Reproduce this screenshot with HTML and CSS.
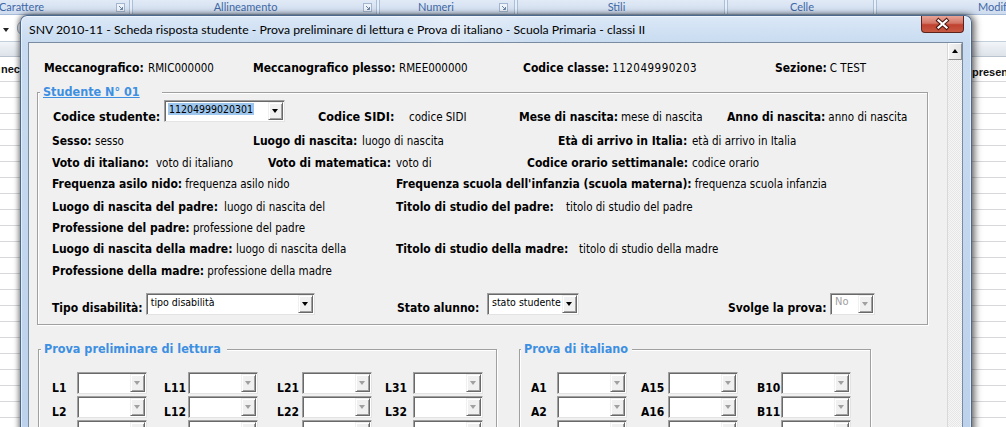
FILE: index.html
```html
<!DOCTYPE html>
<html lang="it">
<head>
<meta charset="utf-8">
<title>SNV 2010-11</title>
<link rel="stylesheet" href="styles.css">
</head>
<body>
<div class="excel">
  <div class="ribbon">
    <div class="grp rg1"><span>Carattere</span><svg class="launch" width="9" height="9" viewBox="0 0 9 9"><rect x="0.5" y="0.5" width="8" height="8" fill="#eef3f9" stroke="#a3b6cf"/><path d="M3 3 L6.5 6.5 M6.5 4 V6.5 H4" stroke="#6d86a8" fill="none"/></svg></div>
    <div class="sep"></div>
    <div class="grp rg2"><span>Allineamento</span><svg class="launch" width="9" height="9" viewBox="0 0 9 9"><rect x="0.5" y="0.5" width="8" height="8" fill="#eef3f9" stroke="#a3b6cf"/><path d="M3 3 L6.5 6.5 M6.5 4 V6.5 H4" stroke="#6d86a8" fill="none"/></svg></div>
    <div class="sep"></div>
    <div class="grp rg3"><span>Numeri</span><svg class="launch" width="9" height="9" viewBox="0 0 9 9"><rect x="0.5" y="0.5" width="8" height="8" fill="#eef3f9" stroke="#a3b6cf"/><path d="M3 3 L6.5 6.5 M6.5 4 V6.5 H4" stroke="#6d86a8" fill="none"/></svg></div>
    <div class="sep"></div>
    <div class="grp rg4"><span>Stili</span></div>
    <div class="sep"></div>
    <div class="grp rg5"><span>Celle</span></div>
    <div class="sep"></div>
    <div class="grp rg6"><span>Modifica</span></div>
  </div>
  <div class="fbar">
    <span class="namebox-arrow"></span>
    <span class="fx-btn"></span>
  </div>
  <div class="sheet-head"></div>
  <div class="sheet-row1">
    <span class="cell-left">nec</span>
    <span class="cell-right">presenze</span>
  </div>
  <div class="sheet-rows"></div>
</div>

<div class="dialog">
  <div class="titlebar">
    <span class="title">SNV 2010-11 - Scheda risposta studente - Prova preliminare di lettura e Prova di italiano - Scuola Primaria - classi II</span>
  </div>
  <div class="close">
    <svg width="41" height="16" viewBox="0 0 41 16">
      <path d="M16.5 4.5 L24.5 11.5 M24.5 4.5 L16.5 11.5" stroke="#4a1712" stroke-width="4.2" stroke-linecap="square" fill="none"/>
      <path d="M16.5 4.5 L24.5 11.5 M24.5 4.5 L16.5 11.5" stroke="#ffffff" stroke-width="2.2" stroke-linecap="square" fill="none"/>
    </svg>
  </div>
  <div class="frame">
    <div class="client">
      <div class="hdr">
        <div class="f h1"><b class="lb">Meccanografico:</b><span class="v">RMIC000000</span></div>
        <div class="f h2"><b class="lb">Meccanografico plesso:</b><span class="v">RMEE000000</span></div>
        <div class="f h3"><b class="lb">Codice classe:</b><span class="v code">112049990203</span></div>
        <div class="f h4"><b class="lb">Sezione:</b><span class="v">C TEST</span></div>
      </div>

      <fieldset class="box box-stud">
        <legend class="cap cap-stud">Studente N° 01</legend>
        <div class="row r1">
          <div class="f a1"><b class="lb lb-lg">Codice studente:</b><div class="cb cb-stud"><span class="cbt"><span class="sel">11204999020301</span></span><span class="cbb"></span></div></div>
          <div class="f a2"><b class="lb lb-lg">Codice SIDI:</b><span class="v">codice SIDI</span></div>
          <div class="f a3"><b class="lb">Mese di nascita:</b><span class="v">mese di nascita</span></div>
          <div class="f a4"><b class="lb">Anno di nascita:</b><span class="v">anno di nascita</span></div>
        </div>
        <div class="row r2">
          <div class="f b1"><b class="lb">Sesso:</b><span class="v">sesso</span></div>
          <div class="f b2"><b class="lb">Luogo di nascita:</b><span class="v">luogo di nascita</span></div>
          <div class="f b3"><b class="lb">Età di arrivo in Italia:</b><span class="v">età di arrivo in Italia</span></div>
        </div>
        <div class="row r3">
          <div class="f c1"><b class="lb">Voto di italiano:</b><span class="v">voto di italiano</span></div>
          <div class="f c2"><b class="lb">Voto di matematica:</b><span class="v">voto di</span></div>
          <div class="f c3"><b class="lb">Codice orario settimanale:</b><span class="v">codice orario</span></div>
        </div>
        <div class="row r4">
          <div class="f d1"><b class="lb">Frequenza asilo nido:</b><span class="v">frequenza asilo nido</span></div>
          <div class="f d2"><b class="lb">Frequenza scuola dell'infanzia (scuola materna):</b><span class="v">frequenza scuola infanzia</span></div>
        </div>
        <div class="row r5">
          <div class="f e1"><b class="lb">Luogo di nascita del padre:</b><span class="v">luogo di nascita del</span></div>
          <div class="f e2"><b class="lb">Titolo di studio del padre:</b><span class="v">titolo di studio del padre</span></div>
        </div>
        <div class="row r6">
          <div class="f p1"><b class="lb">Professione del padre:</b><span class="v">professione del padre</span></div>
        </div>
        <div class="row r7">
          <div class="f m1"><b class="lb">Luogo di nascita della madre:</b><span class="v">luogo di nascita della</span></div>
          <div class="f m2"><b class="lb">Titolo di studio della madre:</b><span class="v">titolo di studio della madre</span></div>
        </div>
        <div class="row r8">
          <div class="f p2"><b class="lb">Professione della madre:</b><span class="v">professione della madre</span></div>
        </div>
        <div class="row r9">
          <div class="f k1"><b class="lb">Tipo disabilità:</b><div class="cb cb-dis"><span class="cbt">tipo disabilità</span><span class="cbb"></span></div></div>
          <div class="f k2"><b class="lb">Stato alunno:</b><div class="cb cb-stato"><span class="cbt">stato studente</span><span class="cbb"></span></div></div>
          <div class="f k3"><b class="lb">Svolge la prova:</b><div class="cb cb-svolge off"><span class="cbt">No</span><span class="cbb"></span></div></div>
        </div>
      </fieldset>

      <div class="tests">
        <fieldset class="box box-lett">
          <legend class="cap cap-lett">Prova preliminare di lettura</legend>
          <div class="grid grid-lett">
            <div class="grow">
              <div class="cell l1"><b class="gl">L1</b><div class="cb gcb off"><span class="cbt"></span><span class="cbb"></span></div></div>
              <div class="cell l2"><b class="gl">L11</b><div class="cb gcb off"><span class="cbt"></span><span class="cbb"></span></div></div>
              <div class="cell l3"><b class="gl">L21</b><div class="cb gcb off"><span class="cbt"></span><span class="cbb"></span></div></div>
              <div class="cell l4"><b class="gl">L31</b><div class="cb gcb off"><span class="cbt"></span><span class="cbb"></span></div></div>
            </div>
            <div class="grow">
              <div class="cell l1"><b class="gl">L2</b><div class="cb gcb off"><span class="cbt"></span><span class="cbb"></span></div></div>
              <div class="cell l2"><b class="gl">L12</b><div class="cb gcb off"><span class="cbt"></span><span class="cbb"></span></div></div>
              <div class="cell l3"><b class="gl">L22</b><div class="cb gcb off"><span class="cbt"></span><span class="cbb"></span></div></div>
              <div class="cell l4"><b class="gl">L32</b><div class="cb gcb off"><span class="cbt"></span><span class="cbb"></span></div></div>
            </div>
            <div class="grow">
              <div class="cell l1"><b class="gl">L3</b><div class="cb gcb off"><span class="cbt"></span><span class="cbb"></span></div></div>
              <div class="cell l2"><b class="gl">L13</b><div class="cb gcb off"><span class="cbt"></span><span class="cbb"></span></div></div>
              <div class="cell l3"><b class="gl">L23</b><div class="cb gcb off"><span class="cbt"></span><span class="cbb"></span></div></div>
              <div class="cell l4"><b class="gl">L33</b><div class="cb gcb off"><span class="cbt"></span><span class="cbb"></span></div></div>
            </div>
          </div>
        </fieldset>
        <fieldset class="box box-ital">
          <legend class="cap cap-ital">Prova di italiano</legend>
          <div class="grid grid-ital">
            <div class="grow">
              <div class="cell i1"><b class="gl">A1</b><div class="cb gcb off"><span class="cbt"></span><span class="cbb"></span></div></div>
              <div class="cell i2"><b class="gl">A15</b><div class="cb gcb off"><span class="cbt"></span><span class="cbb"></span></div></div>
              <div class="cell i3"><b class="gl">B10</b><div class="cb gcb off"><span class="cbt"></span><span class="cbb"></span></div></div>
            </div>
            <div class="grow">
              <div class="cell i1"><b class="gl">A2</b><div class="cb gcb off"><span class="cbt"></span><span class="cbb"></span></div></div>
              <div class="cell i2"><b class="gl">A16</b><div class="cb gcb off"><span class="cbt"></span><span class="cbb"></span></div></div>
              <div class="cell i3"><b class="gl">B11</b><div class="cb gcb off"><span class="cbt"></span><span class="cbb"></span></div></div>
            </div>
            <div class="grow">
              <div class="cell i1"><b class="gl">A3</b><div class="cb gcb off"><span class="cbt"></span><span class="cbb"></span></div></div>
              <div class="cell i2"><b class="gl">A17</b><div class="cb gcb off"><span class="cbt"></span><span class="cbb"></span></div></div>
              <div class="cell i3"><b class="gl">B12</b><div class="cb gcb off"><span class="cbt"></span><span class="cbb"></span></div></div>
            </div>
          </div>
        </fieldset>
      </div>
    </div>
    <div class="vscroll"><div class="sb-up"></div><div class="sb-track"></div></div>
  </div>
</div>
</body>
</html>
```

FILE: styles.css
```css
* { box-sizing: border-box; }
html, body { margin: 0; padding: 0; }
body {
  width: 1006px; height: 427px; overflow: hidden; position: relative;
  background: #fff; font-family: "DejaVu Sans Condensed", "DejaVu Sans", sans-serif;
}

/* ---------- Excel background ---------- */
.excel { width: 1006px; height: 427px; display: flex; flex-direction: column; overflow: hidden; }
.ribbon {
  height: 15px; flex: none; display: flex;
  background: linear-gradient(#e1eaf6, #cfdcee);
  border-bottom: 1px solid #a7bcd8;
  font: 11px Lato, "Noto Sans", sans-serif; color: #3f68a6;
}
.grp { flex: none; display: flex; justify-content: center; align-items: center; position: relative; line-height: 14px; }
.sep { flex: none; width: 4px; border-left: 1px solid #aabfda; border-right: 1px solid #aabfda; background: #e8eff8; }
.rg1 { margin-left: -86px; width: 215px; }
.rg2 { width: 243px; padding-right: 18px; }
.rg3 { width: 134px; padding-right: 22px; }
.rg4 { width: 206px; padding-right: 9px; }
.rg5 { width: 145px; padding-left: 3px; }
.rg6 { width: 200px; justify-content: flex-start; padding-left: 101px; }
.launch { position: absolute; top: 3px; display: block; }
.rg1 .launch { right: 4px; }
.rg2 .launch { right: 4px; }
.rg3 .launch { right: 6px; }

.fbar { height: 27px; flex: none; display: flex; align-items: center; gap: 8px; padding-left: 3px; background: #fff; border-bottom: 1px solid #c4cfdc; }
.namebox-arrow { width: 0; height: 0; border-left: 3px solid transparent; border-right: 3px solid transparent; border-top: 4px solid #222; margin-top: 3px; }
.fx-btn { width: 12px; height: 14px; border-radius: 6px; border: 1px solid #9aa7b6; background: linear-gradient(#f7f9fc, #d7dfe9); }

.sheet-head { height: 15px; flex: none; background: linear-gradient(#f1f4f8, #dde3ea); border-bottom: 1px solid #b9c3cf; }
.sheet-row1 {
  height: 25px; flex: none; display: flex; justify-content: space-between; align-items: center;
  border-bottom: 1px solid #d6d8db; font: bold 11px "Liberation Sans", sans-serif; color: #111;
}
.cell-left { padding-left: 1px; }
.cell-right { width: 34px; overflow: hidden; white-space: nowrap; padding-top: 6px; }
.sheet-rows { flex: 1; background: repeating-linear-gradient(to bottom, #fff 0 15px, #d6d8db 15px 16px); }

/* ---------- Dialog window ---------- */
.dialog {
  position: absolute; left: 20px; top: 15px; width: 952px; height: 440px;
  border: 1px solid #4c6a8e; border-bottom: 0;
  border-radius: 7px 7px 0 0;
  background:
    linear-gradient(100deg, rgba(255,255,255,0) 0 38%, rgba(255,255,255,.35) 45%, rgba(255,255,255,0) 55% 100%) 0 0 / 100% 27px no-repeat,
    linear-gradient(180deg, #dbe8f7 0px, #c8dbf0 27px, #bcd1eb 100%);
  box-shadow: 3px 0 7px rgba(0,0,0,.55), -2px 0 5px rgba(0,0,0,.35), inset 0 0 0 1px rgba(255,255,255,.55);
  display: flex; flex-direction: column;
  padding: 0 8px 0 7px;
}
.titlebar { height: 26px; flex: none; display: flex; align-items: center; padding-left: 1px; }
.title { font: 12.25px Lato, "Noto Sans", sans-serif; color: #000; white-space: nowrap; padding-top: 1px; }
.close {
  position: absolute; top: 0; right: 7px; width: 43px; height: 17px;
  border: 1px solid #5b231c; border-top: 0; border-radius: 0 0 4px 4px;
  background: linear-gradient(180deg, #e8a496 0%, #d27566 45%, #c0402f 55%, #c75a44 100%);
  display: flex; align-items: center; justify-content: center;
}
.close svg { display: block; }

.frame { flex: 1; display: flex; border: 1px solid #798ba0; border-bottom: 0; min-height: 0; }
.client { flex: 1; background: #f0f0f0; font-size: 12px; line-height: 14px; color: #000; overflow: hidden; }

/* scrollbar */
.vscroll { width: 15px; flex: none; display: flex; flex-direction: column; background: #f4f4f4; border-left: 1px solid #d8d8d8; }
.sb-up {
  height: 17px; flex: none; position: relative;
  background: linear-gradient(90deg, #f2f2f2, #e4e4e4);
  border: 1px solid; border-color: #fff #8e8f8f #8e8f8f #fff;
}
.sb-up::after {
  content: ""; position: absolute; left: 3px; top: 5px;
  border-left: 3.5px solid transparent; border-right: 3.5px solid transparent; border-bottom: 4px solid #000;
}
.sb-track { flex: 1; background: repeating-conic-gradient(#f6f6f6 0 25%, #e6e6e6 0 50%) 0 0 / 2px 2px; }

/* generic field */
.f { display: flex; align-items: flex-end; flex: none; white-space: nowrap; }
.lb { font-weight: bold; flex: none; padding-right: 3px; }
.lb-lg { font-size: 12.5px; }
.v { flex: none; font-size: 11.5px; }
.code { letter-spacing: 0.5px; }

/* header */
.hdr { display: flex; margin-top: 18px; padding-left: 15px; height: 14px; }
.h1 { width: 209px; } .h1 .lb { min-width: 104px; }
.h2 { width: 270px; } .h2 .lb { min-width: 146px; }
.h3 { width: 252px; } .h3 .lb { min-width: 79px; }
.h4 .lb { min-width: 52px; }

/* group frames */
.box {
  margin: 0; padding: 0; min-width: 0;
  border: 1px solid #a0a0a0;
  box-shadow: 1px 1px 0 #fff, inset 1px 1px 0 #fff;
}
.cap {
  padding: 0 0 0 3px; margin-left: 2px; height: 14px; line-height: 14px;
  font-weight: bold; font-size: 12.5px; color: #3d8fe2; background: #f0f0f0; white-space: nowrap;
}
.cap-stud { width: 122px; text-decoration: underline; }
.cap-lett { width: 186px; }
.cap-ital { width: 111px; margin-left: 1px; }

.box-stud { margin: 10px 0 0 8px; width: 891px; padding-bottom: 9px; }
.row { display: flex; align-items: flex-end; }
.r1 { margin-top: 1px; height: 24px; padding-left: 15px; }
.r2 { margin-top: 10px; padding-left: 14px; }
.r3 { margin-top: 8px; padding-left: 14px; }
.r4 { margin-top: 7px; padding-left: 14px; }
.r5 { margin-top: 9px; padding-left: 14px; }
.r6 { margin-top: 7px; padding-left: 14px; }
.r7 { margin-top: 7px; padding-left: 14px; }
.r8 { margin-top: 8px; padding-left: 14px; }
.r9 { margin-top: 15px; height: 22px; padding-left: 14px; }

.a1 { width: 265px; } .a1 .lb { min-width: 111px; }
.a2 { width: 201px; } .a2 .lb { min-width: 91px; }
.a3 { width: 208px; } .a3 .lb { min-width: 97px; }
.a4 .lb { min-width: 100px; }
.b1 { width: 201px; } .b1 .lb { min-width: 43px; }
.b2 { width: 305px; } .b2 .lb { min-width: 109px; }
.b3 .lb { min-width: 134px; }
.c1 { width: 216px; } .c1 .lb { min-width: 104px; }
.c2 { width: 259px; } .c2 .lb { min-width: 128px; }
.c3 .lb { min-width: 165px; }
.d1 { width: 344px; } .d1 .lb { min-width: 132px; }
.d2 .lb { min-width: 296px; }
.e1 { width: 344px; } .e1 .lb { min-width: 172px; }
.e2 .lb { min-width: 170px; }
.m1 { width: 344px; } .m1 .lb { min-width: 184px; }
.m2 .lb { min-width: 183px; }
.p1 .lb { min-width: 141px; }
.p2 .lb { min-width: 155px; }
.k1 { width: 345px; } .k1 .lb { min-width: 91px; }
.k2 { width: 331px; } .k2 .lb { min-width: 90px; }
.k3 .lb { min-width: 102px; }
.r1 .cb { margin-bottom: 2px; }

/* combobox */
.cb {
  display: flex; height: 22px; flex: none; background: #fff;
  border: 1px solid; border-color: #a0a0a0 #e3e3e3 #e3e3e3 #a0a0a0;
  box-shadow: inset 1px 1px 0 #696969;
  padding: 1px;
}
.cbt { flex: 1; font-size: 10.5px; line-height: 12px; padding: 1px 0 0 3px; white-space: nowrap; overflow: hidden; }
.sel { background: #9dc6ee; color: #000; padding: 0 1px; margin-left: -1px; }
.cbb {
  width: 15px; flex: none; position: relative; background: #f0f0f0;
  border: 1px solid; border-color: #f0f0f0 #696969 #696969 #f0f0f0;
  box-shadow: inset 1px 1px 0 #fff, inset -1px -1px 0 #a0a0a0;
}
.cbb::after {
  content: ""; position: absolute; left: 3px; top: 50%; margin-top: -2px;
  border-left: 3.5px solid transparent; border-right: 3.5px solid transparent; border-top: 4px solid #000;
}
.off .cbb::after { border-top-color: #a0a0a0; }
.off .cbt { color: #a0a0a0; }
.cb-stud { width: 121px; }
.cb-dis { width: 169px; }
.cb-stato { width: 92px; }
.cb-svolge { width: 45px; }
.cb-svolge .cbt { font-size: 11px; }

/* tests */
.tests { display: flex; margin-top: 17px; }
.box-lett { margin-left: 9px; width: 459px; }
.box-ital { margin-left: 22px; width: 352px; }
.grid { display: flex; flex-direction: column; gap: 2px; padding-top: 16px; padding-bottom: 40px; }
.grid-lett { padding-left: 13px; }
.grid-ital { padding-left: 11px; }
.grow { display: flex; height: 22px; }
.cell { display: flex; flex: none; align-items: flex-end; }
.gl { flex: none; margin-bottom: -1px; }
.gcb { width: 70px; }
.l1 { width: 112px; } .l1 .gl { width: 25px; }
.l2 { width: 113px; } .l2 .gl { width: 24px; }
.l3 { width: 108px; } .l3 .gl { width: 25px; }
.l4 .gl { width: 28px; }
.i1 { width: 110px; } .i1 .gl { width: 26px; }
.i2 { width: 116px; } .i2 .gl { width: 27px; }
.i3 .gl { width: 24px; }
```
